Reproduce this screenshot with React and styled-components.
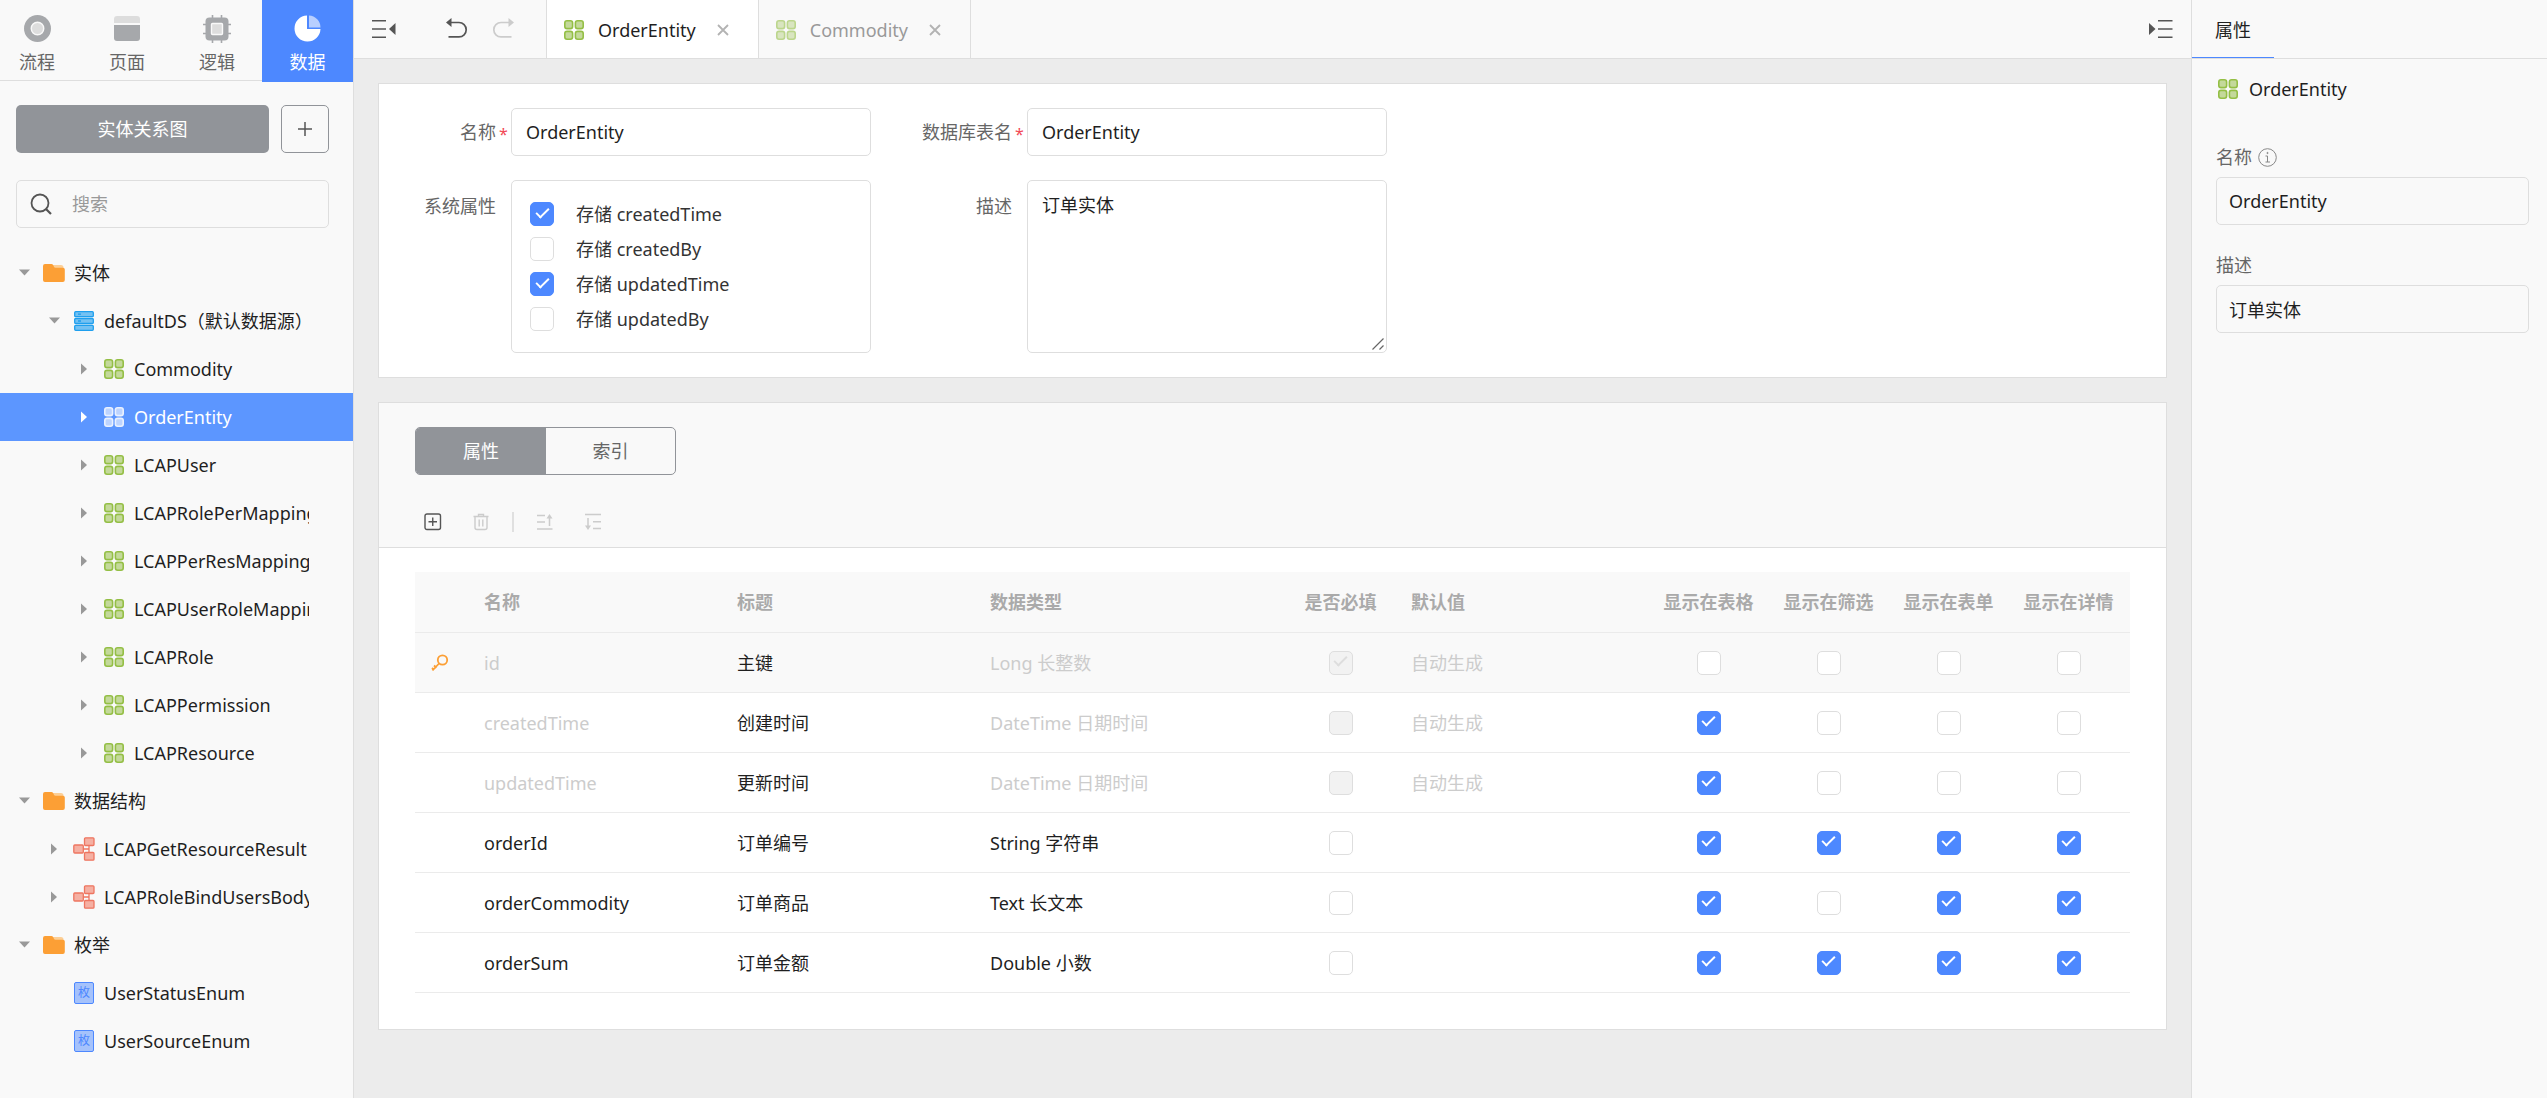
import styled, { createGlobalStyle, css } from "styled-components";

const colors = {
  blue: "#4d88ff",
  blueRow: "#5c96ff",
  panel: "#f9f9f9",
  canvas: "#ececec",
  line: "#dedede",
  lineLight: "#ebebeb",
  gray: "#919499",
  text: "#1f1f1f",
  label: "#666666",
  muted: "#999999",
  disabled: "#cccccc",
  green: "#94bf45",
  white: "#ffffff",
};

const GlobalStyle = createGlobalStyle`
  *, *::before, *::after {
    box-sizing: border-box;
  }
  body {
    margin: 0;
    background-color: ${colors.canvas};
  }
  body, button, input, textarea {
    font-family: "Noto Sans", "Noto Sans CJK SC", sans-serif;
    font-size: 18px;
    line-height: 24px;
    color: ${colors.text};
  }
  button {
    padding: 0;
    border: none;
    background: none;
    cursor: pointer;
  }
  svg {
    display: block;
    flex-shrink: 0;
  }
`;

const Page = styled.div`
  display: grid;
  grid-template-columns: 354px minmax(0, 1fr) 356px;
  min-height: 100vh;
`;

// left
const Sidebar = styled.aside`
  background-color: ${colors.panel};
  border-right: 1px solid ${colors.line};
`;

const ModeBar = styled.nav`
  display: flex;
  justify-content: flex-end;
  height: 82px;
  overflow: hidden;
`;

const ModeButton = styled.button`
  flex: 0 0 90px;
  display: flex;
  flex-direction: column;
  align-items: center;
  justify-content: space-between;
  padding: 15px 0 6px;
  height: 81px;
  color: ${colors.label};
  border-bottom: 1px solid ${colors.line};
  ${({ $active }) =>
    $active &&
    css`
      flex-basis: 91px;
      height: 82px;
      padding-bottom: 8px;
      color: ${colors.white};
      background-color: ${colors.blue};
      border-bottom: none;
    `}
`;

const SideActions = styled.div`
  display: flex;
  gap: 12px;
  padding: 23px 24px 0 16px;
`;

const DiagramButton = styled.button`
  flex: 1;
  height: 48px;
  border-radius: 5px;
  color: ${colors.white};
  background-color: ${colors.gray};
`;

const AddButton = styled.button`
  display: flex;
  align-items: center;
  justify-content: center;
  width: 48px;
  height: 48px;
  border: 1px solid ${colors.gray};
  border-radius: 5px;
`;

const SearchBox = styled.label`
  display: flex;
  align-items: center;
  gap: 20px;
  height: 48px;
  margin: 27px 24px 21px 16px;
  padding-left: 13px;
  border: 1px solid ${colors.line};
  border-radius: 5px;
`;

const SearchInput = styled.input`
  flex: 1;
  min-width: 0;
  border: none;
  outline: none;
  padding: 0;
  background: none;
  &::placeholder {
    color: ${colors.muted};
    opacity: 1;
  }
`;

const Tree = styled.ul`
  margin: 0;
  padding: 0;
  list-style: none;
`;

const TreeRow = styled.button`
  display: flex;
  align-items: center;
  gap: 8px;
  width: 100%;
  height: 48px;
  padding-left: ${({ $level }) => 14 + $level * 30}px;
  padding-right: 44px;
  text-align: left;
  ${({ $active }) =>
    $active &&
    css`
      color: ${colors.white};
      background-color: ${colors.blueRow};
    `}
`;

const IconSlot = styled.span`
  flex: 0 0 ${({ $width }) => $width}px;
  display: flex;
  justify-content: center;
`;

const TreeText = styled.span`
  flex: 1;
  min-width: 0;
  overflow: hidden;
  white-space: nowrap;
`;

// middle
const Main = styled.main`
  display: flex;
  flex-direction: column;
`;

const TopBar = styled.header`
  display: flex;
  align-items: center;
  height: 59px;
  background-color: ${colors.panel};
  border-bottom: 1px solid ${colors.line};
`;

const BarTools = styled.div`
  display: flex;
  align-items: center;
  gap: 24px;
  padding-left: 18px;
  padding-right: 32px;
`;

const ToolButton = styled.button`
  display: flex;
  margin-right: ${({ $apart }) => ($apart ? "26px" : "0")};
`;

const FileTab = styled.div`
  display: flex;
  align-items: center;
  gap: 14px;
  height: 58px;
  padding: 2px 29px 0 17px;
  border-left: 1px solid ${colors.line};
  color: ${({ $active }) => ($active ? colors.text : colors.muted)};
  background-color: ${({ $active }) => ($active ? colors.white : "transparent")};
`;

const CloseButton = styled.button`
  display: flex;
  margin-left: 7px;
`;

const BarRest = styled.div`
  flex: 1;
  display: flex;
  align-items: center;
  justify-content: flex-end;
  height: 58px;
  padding-right: 18px;
  border-left: 1px solid ${colors.line};
`;

const Content = styled.div`
  display: flex;
  flex-direction: column;
  gap: 24px;
  padding: 24px;
`;

const Card = styled.section`
  background-color: ${colors.white};
  border: 1px solid ${colors.line};
`;

const Form = styled.form`
  display: grid;
  grid-template-columns: 468px 468px;
  column-gap: 48px;
  row-gap: 24px;
  padding: 24px;
`;

const Field = styled.div`
  display: grid;
  grid-template-columns: 108px 1fr;
`;

const FieldLabel = styled.label`
  display: flex;
  justify-content: flex-end;
  width: 108px;
  height: 48px;
  align-items: center;
  padding-right: ${({ $required }) => ($required ? "3px" : "15px")};
  padding-top: ${({ $tall }) => ($tall ? "4px" : "0")};
  color: ${colors.label};
`;

const Star = styled.span`
  width: 12px;
  padding-top: 4px;
  padding-left: 3px;
  font-size: 16px;
  color: #f24957;
`;

const TextInput = styled.input`
  width: 100%;
  height: 48px;
  padding: 0 ${({ $pad }) => $pad || 14}px;
  border: 1px solid ${colors.line};
  border-radius: 5px;
  background: none;
  outline: none;
`;

const TextAreaWrap = styled.div`
  position: relative;
`;

const TextArea = styled.textarea`
  display: block;
  width: 100%;
  height: 173px;
  padding: 12px 14px;
  border: 1px solid ${colors.line};
  border-radius: 5px;
  outline: none;
  &::-webkit-resizer {
    display: none;
  }
`;

const Grip = styled.span`
  position: absolute;
  right: 3px;
  bottom: 3px;
  pointer-events: none;
`;

const CheckList = styled.div`
  display: flex;
  flex-direction: column;
  gap: 11px;
  height: 173px;
  padding: 21px 18px;
  border: 1px solid ${colors.line};
  border-radius: 5px;
`;

const CheckLabel = styled.label`
  display: flex;
  align-items: center;
  gap: 22px;
  color: #333333;
`;

const Checkbox = styled.input.attrs({ type: "checkbox" })`
  appearance: none;
  display: inline-grid;
  place-items: center;
  vertical-align: top;
  width: 24px;
  height: 24px;
  margin: 0;
  border: 1px solid ${colors.line};
  border-radius: 5px;
  background-color: ${colors.white};
  &:checked {
    border-color: ${colors.blue};
    background-color: ${colors.blue};
  }
  &:checked::after {
    content: "";
    width: 7px;
    height: 13px;
    margin-bottom: 6px;
    border: solid ${colors.white};
    border-width: 0 2px 2px 0;
    transform: rotate(45deg);
  }
  &:disabled {
    border-color: ${colors.line};
    background-color: #f2f2f2;
  }
  &:disabled::after {
    border-color: #dddddd;
  }
`;

const CardHead = styled.div`
  padding: 24px 36px 15px;
  background-color: ${colors.panel};
  border-bottom: 1px solid ${colors.line};
`;

const Segment = styled.div`
  display: flex;
  width: max-content;
  height: 48px;
  overflow: hidden;
  border: 1px solid ${colors.gray};
  border-radius: 5px;
`;

const SegmentButton = styled.button`
  width: ${({ $active }) => ($active ? "130px" : "129px")};
  color: ${({ $active }) => ($active ? colors.white : colors.label)};
  background-color: ${({ $active }) => ($active ? colors.gray : "transparent")};
`;

const Toolbar = styled.div`
  display: flex;
  align-items: center;
  gap: 30px;
  height: 20px;
  margin-top: 37px;
  padding-left: 9px;
`;

const Divider = styled.span`
  width: 2px;
  height: 20px;
  margin: 0 -8px;
  background-color: #e0e0e0;
`;

const TableWrap = styled.div`
  padding: 24px 36px 36px;
`;

const Table = styled.table`
  width: 100%;
  table-layout: fixed;
  border-collapse: separate;
  border-spacing: 0;
`;

const Col = styled.col`
  width: ${({ $width }) => $width};
`;

const Th = styled.th`
  height: 61px;
  padding: ${({ $center }) => ($center ? "0 3px 0 0" : "0 16px")};
  text-align: ${({ $center }) => ($center ? "center" : "left")};
  font-weight: 700;
  white-space: nowrap;
  color: #aaaaaa;
  background-color: ${colors.panel};
  border-bottom: 1px solid ${colors.lineLight};
`;

const Td = styled.td`
  height: 60px;
  padding: ${({ $center }) => ($center ? "0 3px 0 0" : "0 16px")};
  text-align: ${({ $center }) => ($center ? "center" : "left")};
  white-space: nowrap;
  color: ${({ $dim }) => ($dim ? colors.disabled : colors.text)};
  border-bottom: 1px solid ${colors.lineLight};
`;

const Tr = styled.tr`
  background-color: ${({ $shade }) => ($shade ? colors.panel : "transparent")};
`;

const KeyCell = styled.span`
  display: flex;
  justify-content: center;
`;

// right
const Inspector = styled.aside`
  background-color: ${colors.panel};
  border-left: 1px solid ${colors.line};
`;

const InspectorBar = styled.div`
  display: flex;
  height: 59px;
  border-bottom: 1px solid ${colors.line};
`;

const InspectorTab = styled.button`
  width: 82px;
  padding-top: 2px;
  border-bottom: 1px solid ${colors.blue};
`;

const InspectorBody = styled.div`
  padding: 18px 18px 24px 24px;
`;

const InspectorTitle = styled.div`
  display: flex;
  align-items: center;
  gap: 11px;
  height: 24px;
  padding-left: 2px;
  margin-bottom: 44px;
`;

const InspectorField = styled.div`
  margin-bottom: 28px;
`;

const InspectorLabel = styled.label`
  display: flex;
  align-items: center;
  gap: 6px;
  height: 24px;
  margin-bottom: 8px;
  color: ${colors.label};
`;

// icons
function FlowIcon() {
  return (
    <svg width="27" height="27" viewBox="0 0 26 26">
      <circle cx="13" cy="13" r="13" fill="#a6a8ab" />
      <circle cx="13" cy="13" r="6" fill="#dddddd" stroke="#f9f9f9" strokeWidth="1.4" />
    </svg>
  );
}

function PageIcon() {
  return (
    <svg width="26" height="26" viewBox="0 0 26 26">
      <path d="M3 1h20a3 3 0 0 1 3 3v4H0V4a3 3 0 0 1 3-3z" fill="#dddddd" />
      <path d="M0 10h26v13a3 3 0 0 1-3 3H3a3 3 0 0 1-3-3z" fill="#a6a8ab" />
    </svg>
  );
}

function LogicIcon() {
  return (
    <svg width="28" height="28" viewBox="0 0 28 28">
      <path d="M9.500 0v28M18.500 0v28M0 9.500h28M0 18.500h28" stroke="#a6a8ab" strokeWidth="1.600" />
      <rect x="2.500" y="2.500" width="23" height="23" rx="4" fill="#a6a8ab" />
      <rect x="8.500" y="8.500" width="11" height="11" rx="1" fill="#dddddd" stroke="#f9f9f9" strokeWidth="1.400" />
    </svg>
  );
}

function DataIcon() {
  return (
    <svg width="27" height="27" viewBox="0 0 27 27">
      <path d="M13 .5V14h13.500A13 13 0 1 1 13 .5z" fill="#ffffff" />
      <path d="M15 .5A12 12 0 0 1 26.500 12.500H15z" fill="#b8cfff" />
    </svg>
  );
}

function PlusIcon() {
  return (
    <svg width="14" height="14" viewBox="0 0 14 14">
      <path d="M7 0v14M0 7h14" stroke="#555555" strokeWidth="1.500" />
    </svg>
  );
}

function SearchIcon() {
  return (
    <svg width="22" height="22" viewBox="0 0 22 22" fill="none" stroke="#555555" strokeWidth="1.800">
      <circle cx="10" cy="10" r="8.500" />
      <path d="M16 16l5 5" strokeWidth="2.200" />
    </svg>
  );
}

function ArrowIcon({ open, color = "#999999" }) {
  return open ? (
    <svg width="11" height="12" viewBox="0 0 11 12">
      <path d="M0 2.500h11L5.500 8.500z" fill={color} />
    </svg>
  ) : (
    <svg width="12" height="12" viewBox="0 0 12 12">
      <path d="M3 .5l6 5.500-6 5.500z" fill={color} />
    </svg>
  );
}

function FolderIcon() {
  return (
    <svg width="22" height="20" viewBox="0 0 22 20">
      <path d="M10 2h8a2.500 2.500 0 0 1 2.500 2.500V6H10z" fill="#fccf97" />
      <path
        d="M2 1h6.500c1.200 0 1.500.8 2 1.800.5 1.200.8 2 2 2H20a1.800 1.800 0 0 1 1.800 1.800V17a2 2 0 0 1-2 2H2a2 2 0 0 1-2-2V3a2 2 0 0 1 2-2z"
        fill="#fc9f35"
      />
    </svg>
  );
}

function SourceIcon() {
  return (
    <svg width="20" height="20" viewBox="0 0 20 20" fill="#74c1f2" stroke="#1e9fee" strokeWidth="1.300">
      <rect x=".7" y=".7" width="18.600" height="5" rx="1" />
      <rect x=".7" y="7.500" width="18.600" height="5" rx="1" />
      <rect x=".7" y="14.300" width="18.600" height="5" rx="1" />
      <path d="M4 3.200h3M4 10h3" />
    </svg>
  );
}

function EntityIcon({ white, faded }) {
  const stroke = white ? "#eaf1ff" : colors.green;
  const fill = white ? "#bdd4ff" : "#c4d99b";
  return (
    <svg width="20" height="20" viewBox="0 0 20 20" fill={fill} stroke={stroke} strokeWidth="1.600" opacity={faded ? 0.6 : 1}>
      <rect x=".8" y=".8" width="7.800" height="7.800" rx="2.200" />
      <rect x="11.400" y=".8" width="7.800" height="7.800" rx="2.200" />
      <rect x=".8" y="11.400" width="7.800" height="7.800" rx="2.200" />
      <rect x="11.400" y="11.400" width="7.800" height="7.800" rx="2.200" />
    </svg>
  );
}

function StructIcon() {
  return (
    <svg width="22" height="24" viewBox="0 0 22 24" fill="#f5b0a3" stroke="#ee7560" strokeWidth="1.300">
      <path d="M10 12h6M16 8v8" />
      <rect x=".8" y="8" width="9.500" height="8" rx="1" />
      <rect x="11.500" y=".8" width="9.500" height="7.700" rx="1" />
      <rect x="11.500" y="15.500" width="9.500" height="7.700" rx="1" />
    </svg>
  );
}

const EnumBadge = styled.span`
  display: flex;
  align-items: center;
  justify-content: center;
  width: 20px;
  height: 22px;
  border: 1px solid ${colors.blue};
  border-radius: 2px;
  font-size: 12px;
  line-height: 12px;
  color: ${colors.blue};
  background-color: #a5c2fb;
`;

function CollapseIcon({ flip }) {
  return (
    <svg width="24" height="20" viewBox="0 0 24 20">
      {flip ? (
        <>
          <path d="M9 1.800h14.500M9 10h14.500M9 18.200h14.500" stroke="#555555" strokeWidth="1.500" />
          <path d="M0 4v12l6.500-6z" fill="#555555" />
        </>
      ) : (
        <>
          <path d="M0 1.800h14M0 10h14M0 18.200h14" stroke="#555555" strokeWidth="1.500" />
          <path d="M23.500 4v12L17 10z" fill="#555555" />
        </>
      )}
    </svg>
  );
}

function UndoIcon({ redo }) {
  const color = redo ? "#cccccc" : "#555555";
  return (
    <svg width="22" height="24" viewBox="0 0 22 24" fill="none">
      <g transform={redo ? "matrix(-1 0 0 1 22 0)" : undefined}>
        <path d="M4 5.500h9a7.200 7.200 0 0 1 0 14.400H2.500" stroke={color} strokeWidth="1.700" />
        <path d="M0 5.500L5.500 1v9z" fill={color} />
      </g>
    </svg>
  );
}

function CloseIcon() {
  return (
    <svg width="12" height="12" viewBox="0 0 12 12">
      <path d="M1 1l10 10M11 1L1 11" stroke="#b3b3b3" strokeWidth="1.800" />
    </svg>
  );
}

function GripIcon() {
  return (
    <svg width="12" height="12" viewBox="0 0 12 12">
      <path d="M.5 11.500l11-11M7.500 11.500l4-4" stroke="#666666" strokeWidth="1.200" />
    </svg>
  );
}

function AddRowIcon() {
  return (
    <svg width="18" height="18" viewBox="0 0 18 18" fill="none" stroke="#555555" strokeWidth="1.400">
      <rect x="1" y="1" width="15.500" height="15.500" rx="2" />
      <path d="M8.750 4.500v8.500M4.500 8.750h8.500" />
    </svg>
  );
}

function TrashIcon() {
  return (
    <svg width="18" height="18" viewBox="0 0 18 18" fill="none" stroke="#cccccc" strokeWidth="1.400">
      <path d="M1.500 3.500h15M6.500 3V1.500h5V3M3 3.500v11a2 2 0 0 0 2 2h8a2 2 0 0 0 2-2v-11M7.200 6.500v7M10.800 6.500v7" />
    </svg>
  );
}

function InsertUpIcon() {
  return (
    <svg width="18" height="18" viewBox="0 0 18 18">
      <path d="M1 2.500h8M1 9h8M1 16h15.500M13.500 4v9" stroke="#cccccc" strokeWidth="1.500" />
      <path d="M10.500 5.500l3-4.500 3 4.500z" fill="#cccccc" />
    </svg>
  );
}

function InsertDownIcon() {
  return (
    <svg width="18" height="18" viewBox="0 0 18 18">
      <path d="M1 1.500h16M9 8.800h8M9 15.500h8M4 5v9" stroke="#cccccc" strokeWidth="1.500" />
      <path d="M1 12.500l3 4.500 3-4.500z" fill="#cccccc" />
    </svg>
  );
}

function KeyIcon() {
  return (
    <svg width="18" height="18" viewBox="0 0 18 18" fill="none" stroke="#fc9f35" strokeWidth="1.800">
      <circle cx="11.500" cy="6" r="4.700" />
      <path d="M8 9.500l-6.500 7M3 11.500l2.500 2.200M1 14l2 2" />
    </svg>
  );
}

function InfoIcon() {
  return (
    <svg width="19" height="19" viewBox="0 0 19 19" fill="none" stroke="#888888">
      <circle cx="9.500" cy="9.500" r="8.800" />
      <path d="M7.500 8h2v6M7.500 14h4.500" />
      <circle cx="9.500" cy="5" r=".6" fill="#888888" />
    </svg>
  );
}

const modes = [
  { name: "流程", icon: <FlowIcon /> },
  { name: "页面", icon: <PageIcon /> },
  { name: "逻辑", icon: <LogicIcon /> },
  { name: "数据", icon: <DataIcon />, active: true },
];

const tree = [
  { name: "实体", level: 0, type: "folder", open: true },
  { name: "defaultDS（默认数据源）", level: 1, type: "source", open: true },
  { name: "Commodity", level: 2, type: "entity" },
  { name: "OrderEntity", level: 2, type: "entity", active: true },
  { name: "LCAPUser", level: 2, type: "entity" },
  { name: "LCAPRolePerMapping", level: 2, type: "entity" },
  { name: "LCAPPerResMapping", level: 2, type: "entity" },
  { name: "LCAPUserRoleMapping", level: 2, type: "entity" },
  { name: "LCAPRole", level: 2, type: "entity" },
  { name: "LCAPPermission", level: 2, type: "entity" },
  { name: "LCAPResource", level: 2, type: "entity" },
  { name: "数据结构", level: 0, type: "folder", open: true },
  { name: "LCAPGetResourceResult", level: 1, type: "struct" },
  { name: "LCAPRoleBindUsersBody", level: 1, type: "struct" },
  { name: "枚举", level: 0, type: "folder", open: true },
  { name: "UserStatusEnum", level: 1, type: "enum" },
  { name: "UserSourceEnum", level: 1, type: "enum" },
];

const systemFields = [
  { name: "createdTime", checked: true },
  { name: "createdBy", checked: false },
  { name: "updatedTime", checked: true },
  { name: "updatedBy", checked: false },
];

const showColumns = ["显示在表格", "显示在筛选", "显示在表单", "显示在详情"];

const rows = [
  { name: "id", title: "主键", type: "Long 长整数", required: true, value: "自动生成", locked: true, isKey: true, show: [0, 0, 0, 0] },
  { name: "createdTime", title: "创建时间", type: "DateTime 日期时间", value: "自动生成", locked: true, show: [1, 0, 0, 0] },
  { name: "updatedTime", title: "更新时间", type: "DateTime 日期时间", value: "自动生成", locked: true, show: [1, 0, 0, 0] },
  { name: "orderId", title: "订单编号", type: "String 字符串", show: [1, 1, 1, 1] },
  { name: "orderCommodity", title: "订单商品", type: "Text 长文本", show: [1, 0, 1, 1] },
  { name: "orderSum", title: "订单金额", type: "Double 小数", show: [1, 1, 1, 1] },
];

function TreeIcon({ type, active }) {
  if (type === "folder") return <FolderIcon />;
  if (type === "source") return <SourceIcon />;
  if (type === "struct") return <StructIcon />;
  if (type === "enum") return <EnumBadge>枚</EnumBadge>;
  return <EntityIcon white={active} />;
}

function LeftPanel() {
  return (
    <Sidebar>
      <ModeBar>
        {modes.map((m) => (
          <ModeButton key={m.name} $active={m.active}>
            {m.icon}
            {m.name}
          </ModeButton>
        ))}
      </ModeBar>
      <SideActions>
        <DiagramButton>实体关系图</DiagramButton>
        <AddButton aria-label="新建">
          <PlusIcon />
        </AddButton>
      </SideActions>
      <SearchBox>
        <SearchIcon />
        <SearchInput type="text" placeholder="搜索" aria-label="搜索" />
      </SearchBox>
      <Tree>
        {tree.map((t) => (
          <li key={t.name}>
            <TreeRow $level={t.level} $active={t.active}>
              <IconSlot $width={20}>
                {t.type !== "enum" && (
                  <ArrowIcon open={t.open} color={t.active ? colors.white : undefined} />
                )}
              </IconSlot>
              <IconSlot $width={24}>
                <TreeIcon type={t.type} active={t.active} />
              </IconSlot>
              <TreeText>{t.name}</TreeText>
            </TreeRow>
          </li>
        ))}
      </Tree>
    </Sidebar>
  );
}

function EntityForm() {
  return (
    <Card>
      <Form>
        <Field>
          <FieldLabel htmlFor="entity-name" $required>
            名称<Star>*</Star>
          </FieldLabel>
          <TextInput id="entity-name" type="text" defaultValue="OrderEntity" />
        </Field>
        <Field>
          <FieldLabel htmlFor="table-name" $required>
            数据库表名<Star>*</Star>
          </FieldLabel>
          <TextInput id="table-name" type="text" defaultValue="OrderEntity" />
        </Field>
        <Field>
          <FieldLabel as="span" id="system-fields" $tall>
            系统属性
          </FieldLabel>
          <CheckList role="group" aria-labelledby="system-fields">
            {systemFields.map((f) => (
              <CheckLabel key={f.name}>
                <Checkbox defaultChecked={f.checked} />
                存储 {f.name}
              </CheckLabel>
            ))}
          </CheckList>
        </Field>
        <Field>
          <FieldLabel htmlFor="entity-desc" $tall>
            描述
          </FieldLabel>
          <TextAreaWrap>
            <TextArea id="entity-desc" defaultValue="订单实体" />
            <Grip>
              <GripIcon />
            </Grip>
          </TextAreaWrap>
        </Field>
      </Form>
    </Card>
  );
}

function PropertyTable() {
  return (
    <Card>
      <CardHead>
        <Segment>
          <SegmentButton $active>属性</SegmentButton>
          <SegmentButton>索引</SegmentButton>
        </Segment>
        <Toolbar>
          <ToolButton aria-label="添加属性">
            <AddRowIcon />
          </ToolButton>
          <ToolButton aria-label="删除">
            <TrashIcon />
          </ToolButton>
          <Divider />
          <ToolButton aria-label="向上插入">
            <InsertUpIcon />
          </ToolButton>
          <ToolButton aria-label="向下插入">
            <InsertDownIcon />
          </ToolButton>
        </Toolbar>
      </CardHead>
      <TableWrap>
        <Table>
          <colgroup>
            <Col $width="53px" />
            <Col $width="253px" />
            <Col $width="253px" />
            <Col $width="315px" />
            <Col $width="106px" />
            <Col $width="auto" />
            {showColumns.map((c) => (
              <Col key={c} $width="120px" />
            ))}
          </colgroup>
          <thead>
            <tr>
              <Th />
              <Th>名称</Th>
              <Th>标题</Th>
              <Th>数据类型</Th>
              <Th $center>是否必填</Th>
              <Th>默认值</Th>
              {showColumns.map((c) => (
                <Th key={c} $center>
                  {c}
                </Th>
              ))}
            </tr>
          </thead>
          <tbody>
            {rows.map((r) => (
              <Tr key={r.name} $shade={r.isKey}>
                <Td $center>
                  {r.isKey && (
                    <KeyCell>
                      <KeyIcon />
                    </KeyCell>
                  )}
                </Td>
                <Td $dim={r.locked}>{r.name}</Td>
                <Td>{r.title}</Td>
                <Td $dim={r.locked}>{r.type}</Td>
                <Td $center>
                  <Checkbox defaultChecked={r.required} disabled={r.locked} aria-label={`${r.name} 是否必填`} />
                </Td>
                <Td $dim>{r.value}</Td>
                {r.show.map((s, i) => (
                  <Td key={showColumns[i]} $center>
                    <Checkbox defaultChecked={Boolean(s)} aria-label={`${r.name} ${showColumns[i]}`} />
                  </Td>
                ))}
              </Tr>
            ))}
          </tbody>
        </Table>
      </TableWrap>
    </Card>
  );
}

function RightPanel() {
  return (
    <Inspector>
      <InspectorBar>
        <InspectorTab>属性</InspectorTab>
      </InspectorBar>
      <InspectorBody>
        <InspectorTitle>
          <EntityIcon />
          OrderEntity
        </InspectorTitle>
        <InspectorField>
          <InspectorLabel htmlFor="prop-name">
            名称
            <InfoIcon />
          </InspectorLabel>
          <TextInput id="prop-name" type="text" $pad={12} defaultValue="OrderEntity" />
        </InspectorField>
        <InspectorField>
          <InspectorLabel htmlFor="prop-desc">描述</InspectorLabel>
          <TextInput id="prop-desc" type="text" $pad={12} defaultValue="订单实体" />
        </InspectorField>
      </InspectorBody>
    </Inspector>
  );
}

function App() {
  return (
    <>
      <GlobalStyle />
      <Page>
        <LeftPanel />
        <Main>
          <TopBar>
            <BarTools>
              <ToolButton aria-label="收起左侧" $apart>
                <CollapseIcon />
              </ToolButton>
              <ToolButton aria-label="撤销">
                <UndoIcon />
              </ToolButton>
              <ToolButton aria-label="重做">
                <UndoIcon redo />
              </ToolButton>
            </BarTools>
            <FileTab $active>
              <EntityIcon />
              OrderEntity
              <CloseButton aria-label="关闭">
                <CloseIcon />
              </CloseButton>
            </FileTab>
            <FileTab>
              <EntityIcon faded />
              Commodity
              <CloseButton aria-label="关闭">
                <CloseIcon />
              </CloseButton>
            </FileTab>
            <BarRest>
              <ToolButton aria-label="收起右侧">
                <CollapseIcon flip />
              </ToolButton>
            </BarRest>
          </TopBar>
          <Content>
            <EntityForm />
            <PropertyTable />
          </Content>
        </Main>
        <RightPanel />
      </Page>
    </>
  );
}

export default App;
